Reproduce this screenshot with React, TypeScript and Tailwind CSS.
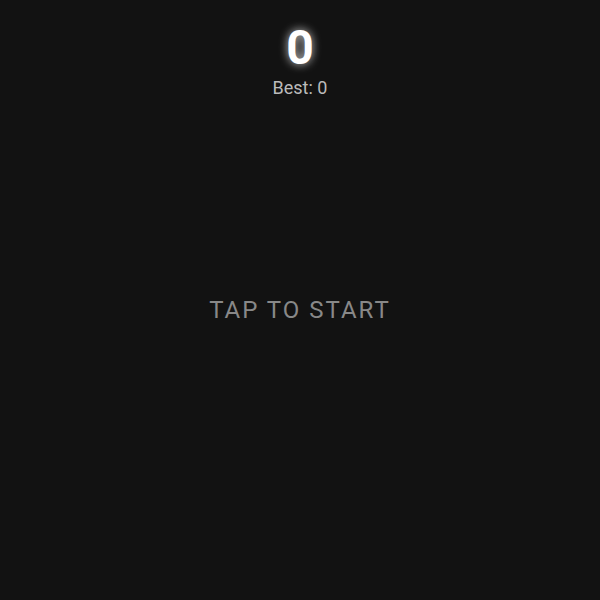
import React from "react";

export default function App() {
  return (
    <div
      className="flex h-[600px] w-full flex-col items-center bg-[#121212] select-none"
      style={{ fontFamily: "Roboto, 'Noto Sans', sans-serif" }}
    >
      {/* score header */}
      <div className="flex flex-col items-center pt-[22px]">
        <div className="text-[48px] font-bold leading-[52px] text-white [text-shadow:0_0_10px_rgba(255,255,255,0.8)]">
          0
        </div>
        <div className="mt-[3px] text-[18px] leading-[22px] text-[#bbbbbb]">Best: 0</div>
      </div>

      {/* start prompt */}
      <div className="mt-[196px] text-[24px] leading-[30px] tracking-[2px] text-[#888888]">
        TAP TO START
      </div>
    </div>
  );
}
